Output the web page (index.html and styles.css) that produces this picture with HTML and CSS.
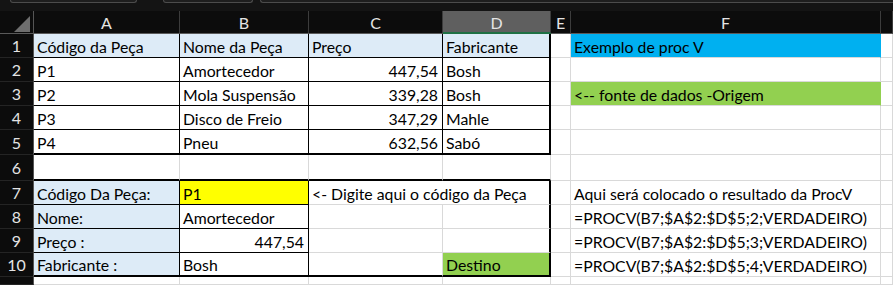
FILE: index.html
```html
<!DOCTYPE html>
<html lang="pt">
<head>
<meta charset="utf-8">
<title>Exemplo de PROCV</title>
<link rel="stylesheet" href="styles.css">
</head>
<body>
<div class="topbar"><span class="tab t1"></span><span class="tab t2"></span><span class="tab t3"></span></div>
<div class="sheet">
  <div class="corner"><span class="tri"></span></div>
  <div class="h">A</div><div class="h">B</div><div class="h">C</div><div class="h hsel">D</div><div class="h">E</div><div class="h">F</div><div class="h"></div>

  <div class="rh">1</div>
  <div class="c lb b">Código da Peça</div>
  <div class="c lb b">Nome da Peça</div>
  <div class="c lb b">Preço</div>
  <div class="c lb bb br2">Fabricante</div>
  <div class="c"></div>
  <div class="c bl">Exemplo de proc V</div>
  <div class="c"></div>

  <div class="rh">2</div>
  <div class="c b">P1</div>
  <div class="c b">Amortecedor</div>
  <div class="c b num">447,54</div>
  <div class="c bb br2">Bosh</div>
  <div class="c"></div>
  <div class="c"></div>
  <div class="c"></div>

  <div class="rh">3</div>
  <div class="c b">P2</div>
  <div class="c b">Mola Suspensão</div>
  <div class="c b num">339,28</div>
  <div class="c bb br2">Bosh</div>
  <div class="c"></div>
  <div class="c gr">&lt;-- fonte de dados -Origem</div>
  <div class="c"></div>

  <div class="rh">4</div>
  <div class="c b">P3</div>
  <div class="c b">Disco de Freio</div>
  <div class="c b num">347,29</div>
  <div class="c bb br2">Mahle</div>
  <div class="c"></div>
  <div class="c"></div>
  <div class="c"></div>

  <div class="rh">5</div>
  <div class="c br bb2">P4</div>
  <div class="c br bb2">Pneu</div>
  <div class="c br bb2 num">632,56</div>
  <div class="c br2 bb2">Sabó</div>
  <div class="c"></div>
  <div class="c"></div>
  <div class="c"></div>

  <div class="rh">6</div>
  <div class="c bb2"></div>
  <div class="c bb2"></div>
  <div class="c bb2"></div>
  <div class="c bb2"></div>
  <div class="c"></div>
  <div class="c"></div>
  <div class="c"></div>

  <div class="rh">7</div>
  <div class="c lb b">Código Da Peça:</div>
  <div class="c yl b">P1</div>
  <div class="c span2 br2">&lt;- Digite aqui o código da Peça</div>
  <div class="c"></div>
  <div class="c">Aqui será colocado o resultado da ProcV</div>
  <div class="c"></div>

  <div class="rh">8</div>
  <div class="c lb b">Nome:</div>
  <div class="c b">Amortecedor</div>
  <div class="c"></div>
  <div class="c br2"></div>
  <div class="c"></div>
  <div class="c">=PROCV(B7;$A$2:$D$5;2;VERDADEIRO)</div>
  <div class="c"></div>

  <div class="rh">9</div>
  <div class="c lb b">Preço :</div>
  <div class="c b num">447,54</div>
  <div class="c"></div>
  <div class="c br2"></div>
  <div class="c"></div>
  <div class="c">=PROCV(B7;$A$2:$D$5;3;VERDADEIRO)</div>
  <div class="c"></div>

  <div class="rh">10</div>
  <div class="c lb br bb2">Fabricante :</div>
  <div class="c br bb2">Bosh</div>
  <div class="c bb2"></div>
  <div class="c gr br2 bb2">Destino</div>
  <div class="c"></div>
  <div class="c">=PROCV(B7;$A$2:$D$5;4;VERDADEIRO)</div>
  <div class="c"></div>

  <div class="rh"></div>
  <div class="c"></div>
  <div class="c"></div>
  <div class="c"></div>
  <div class="c"></div>
  <div class="c"></div>
  <div class="c"></div>
  <div class="c"></div>
</div>
</body>
</html>
```
FILE: styles.css
```css
html, body {
  margin: 0;
  padding: 0;
  background: #ffffff;
}
body {
  width: 893px;
  height: 285px;
  overflow: hidden;
  font-family: Lato, "Liberation Sans", sans-serif;
}
.topbar {
  height: 11px;
  background: #141414;
  display: flex;
  align-items: flex-start;
}
.tab {
  box-sizing: border-box;
  height: 3px;
  border: 1px solid #4c4c4c;
  border-top: none;
  border-radius: 0 0 5px 5px;
  background: #1e1e1e;
}
.t1 { margin-left: 10px; width: 127px; }
.t2 { margin-left: 26px; width: 90px; }
.t3 { margin-left: 7px; flex: 1; border-right: none; border-radius: 0 0 0 5px; }

.sheet {
  display: grid;
  grid-template-columns: 34px 146px 129px 134px 108px 20px 310px 1fr;
  grid-template-rows: 23px 24px 24px 24px 24px 25px 26px 24px 24px 24px 24px 8px;
  height: 274px;
  overflow: hidden;
}
.corner {
  background: #0c0c0c;
  border-right: 1px solid #555555;
  border-bottom: 1px solid #5a5a5a;
  box-sizing: border-box;
  position: relative;
}
.tri {
  position: absolute;
  left: 14px;
  top: 5px;
  width: 0;
  height: 0;
  border-left: 16px solid transparent;
  border-bottom: 16px solid #6e6e6e;
}
.h {
  box-sizing: border-box;
  background: #0c0c0c;
  border-right: 1px solid #3c3c3c;
  border-bottom: 1px solid #5a5a5a;
  color: #e4e4e4;
  font-size: 16px;
  display: flex;
  align-items: center;
  justify-content: center;
  padding-top: 1px;
}
.hsel {
  background: #5f5f5f;
  border-bottom: 2px solid #1f7044;
  padding-top: 2px;
}
.rh {
  box-sizing: border-box;
  background: #0c0c0c;
  border-right: 1px solid #555555;
  border-bottom: 1px solid #242424;
  color: #e4e4e4;
  font-size: 16px;
  display: flex;
  align-items: center;
  justify-content: center;
}
.c {
  box-sizing: border-box;
  border-right: 1px solid #d9d9d9;
  border-bottom: 1px solid #d9d9d9;
  display: flex;
  align-items: flex-end;
  padding: 0 3px 2px 3px;
  font-size: 15.8px;
  line-height: 16px;
  color: #000000;
  white-space: nowrap;
  min-width: 0;
}
.num { justify-content: flex-end; padding-right: 4px; }
.span2 { grid-column: span 2; }
.b { border-right-color: #000; border-bottom-color: #000; }
.br { border-right-color: #000; }
.bb { border-bottom-color: #000; }
.br2 { border-right: 2px solid #000; }
.bb2 { border-bottom: 2px solid #000; }
.lb { background: #ddebf7; }
.yl { background: #ffff00; }
.gr { background: #92d050; }
.bl { background: #00b0f0; border-right-color: #00b0f0; }
.gr:not(.br2) { border-right-color: #92d050; }
```
